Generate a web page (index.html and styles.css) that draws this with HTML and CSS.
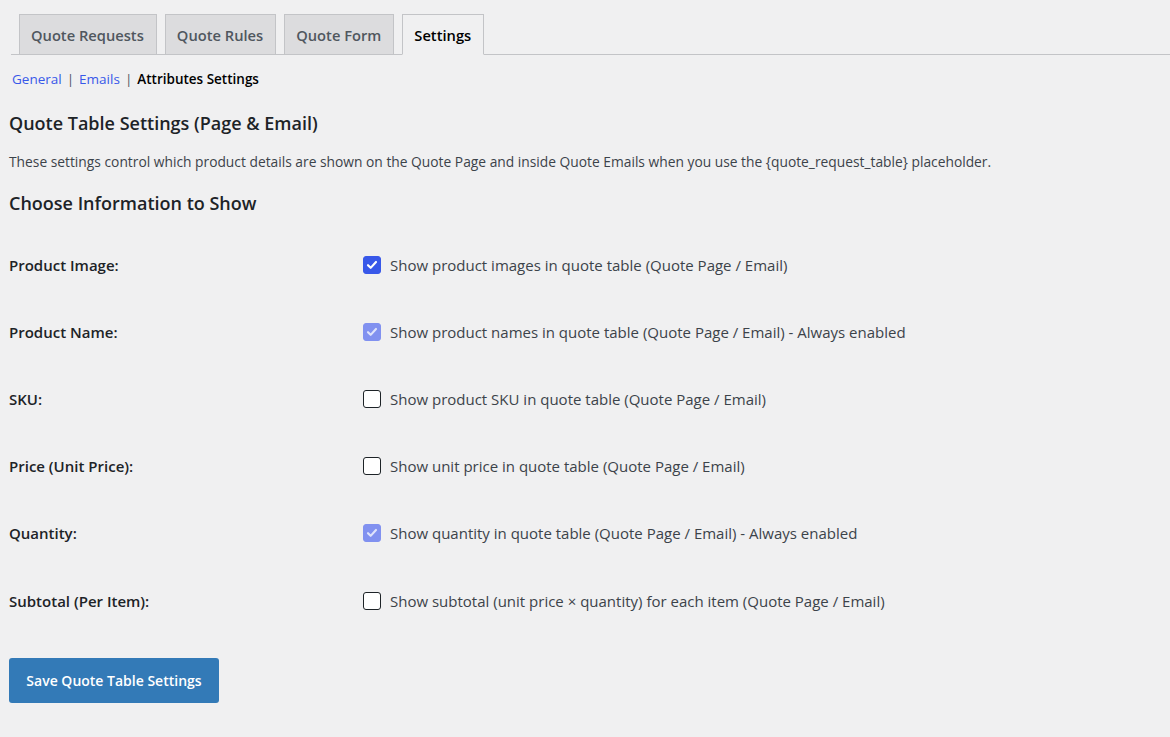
FILE: index.html
```html
<!DOCTYPE html>
<html lang="en">
<head>
<meta charset="utf-8">
<title>Quote Settings</title>
<link rel="stylesheet" href="styles.css">
</head>
<body>
<div class="wrap">
  <nav class="tabs">
    <a class="tab" href="#">Quote Requests</a>
    <a class="tab" href="#">Quote Rules</a>
    <a class="tab" href="#">Quote Form</a>
    <a class="tab active" href="#">Settings</a>
  </nav>
  <div class="subnav">
    <a href="#">General</a><span class="sep">|</span><a href="#">Emails</a><span class="sep">|</span><strong>Attributes Settings</strong>
  </div>
  <div class="content">
    <h2 class="title">Quote Table Settings (Page &amp; Email)</h2>
    <p class="desc">These settings control which product details are shown on the Quote Page and inside Quote Emails when you use the {quote_request_table} placeholder.</p>
    <h3 class="subtitle">Choose Information to Show</h3>
    <div class="rows">
      <div class="row">
        <div class="label">Product Image:</div>
        <label class="opt"><span class="cb checked"><svg viewBox="0 0 18 18"><path d="M4.5 9.2l3 3 6-6.6" /></svg></span>Show product images in quote table (Quote Page / Email)</label>
      </div>
      <div class="row">
        <div class="label">Product Name:</div>
        <label class="opt"><span class="cb checked disabled"><svg viewBox="0 0 18 18"><path d="M4.5 9.2l3 3 6-6.6" /></svg></span>Show product names in quote table (Quote Page / Email) - Always enabled</label>
      </div>
      <div class="row">
        <div class="label">SKU:</div>
        <label class="opt"><span class="cb"></span>Show product SKU in quote table (Quote Page / Email)</label>
      </div>
      <div class="row">
        <div class="label">Price (Unit Price):</div>
        <label class="opt"><span class="cb"></span>Show unit price in quote table (Quote Page / Email)</label>
      </div>
      <div class="row">
        <div class="label">Quantity:</div>
        <label class="opt"><span class="cb checked disabled"><svg viewBox="0 0 18 18"><path d="M4.5 9.2l3 3 6-6.6" /></svg></span>Show quantity in quote table (Quote Page / Email) - Always enabled</label>
      </div>
      <div class="row">
        <div class="label">Subtotal (Per Item):</div>
        <label class="opt"><span class="cb"></span>Show subtotal (unit price × quantity) for each item (Quote Page / Email)</label>
      </div>
    </div>
    <button class="save" type="button">Save Quote Table Settings</button>
  </div>
</div>
</body>
</html>
```
FILE: styles.css
```css
html, body {
  margin: 0;
  padding: 0;
  background: #f0f0f1;
}
body {
  font-family: "Open Sans", "Noto Sans", sans-serif;
  font-size: 14px;
  color: #3c434a;
}
.wrap {
  padding-top: 14px;
}
.tabs {
  display: flex;
  gap: 8px;
  margin-left: 11px;
  padding-left: 8px;
  border-bottom: 1px solid #c3c4c7;
  height: 40px;
  align-items: flex-end;
}
.tab {
  display: flex;
  align-items: center;
  box-sizing: border-box;
  height: 41px;
  margin-bottom: -1px;
  padding: 0 12px 0 11px;
  border: 1px solid #c3c4c7;
  background: #dcdcde;
  color: #50575e;
  font-size: 14.7px;
  font-weight: 600;
  text-decoration: none;
}
.tab.active {
  background: #f0f0f1;
  border-bottom-color: #f0f0f1;
  color: #000;
}
.subnav {
  margin: 14px 0 0 12px;
  font-size: 13.5px;
  line-height: 20px;
  color: #8c8f94;
}
.subnav a {
  color: #3858e9;
  text-decoration: none;
}
.subnav .sep {
  margin: 0 5px;
  color: #50575e;
}
.subnav strong {
  color: #000;
  font-weight: 600;
}
.content {
  padding-left: 9px;
}
.title {
  margin: 22px 0 0;
  font-size: 18px;
  line-height: 24px;
  font-weight: 600;
  color: #1d2327;
}
.desc {
  margin: 17px 0 0;
  font-size: 13.8px;
  line-height: 20px;
}
.subtitle {
  margin: 19px 0 0;
  font-size: 18px;
  line-height: 24px;
  font-weight: 600;
  color: #1d2327;
}
.rows {
  margin-top: 16px;
}
.row {
  display: grid;
  grid-template-columns: 354px 1fr;
  align-items: center;
  height: 67.2px;
}
.label {
  font-weight: 600;
  color: #1d2327;
  font-size: 15px;
}
.opt {
  display: flex;
  align-items: center;
  font-size: 15px;
  color: #3c434a;
}
.cb {
  box-sizing: border-box;
  width: 18px;
  height: 18px;
  border: 1px solid #1d2327;
  border-radius: 3px;
  background: #fff;
  margin-right: 9px;
  display: flex;
  align-items: center;
  justify-content: center;
  flex-shrink: 0;
}
.cb.checked {
  background: #3858e9;
  border-color: #3858e9;
}
.cb.checked.disabled {
  background: #8191f0;
  border-color: #8191f0;
}
.cb svg {
  width: 18px;
  height: 18px;
  fill: none;
  stroke: #fff;
  stroke-width: 2.4;
  stroke-linecap: round;
  stroke-linejoin: round;
}
.cb.disabled svg {
  stroke: #dfe3fb;
}
.save {
  margin-top: 24px;
  width: 210px;
  height: 45px;
  border: none;
  border-radius: 3px;
  background: #337ab7;
  color: #fff;
  font-family: inherit;
  font-size: 14px;
  font-weight: 600;
  cursor: pointer;
}
```
